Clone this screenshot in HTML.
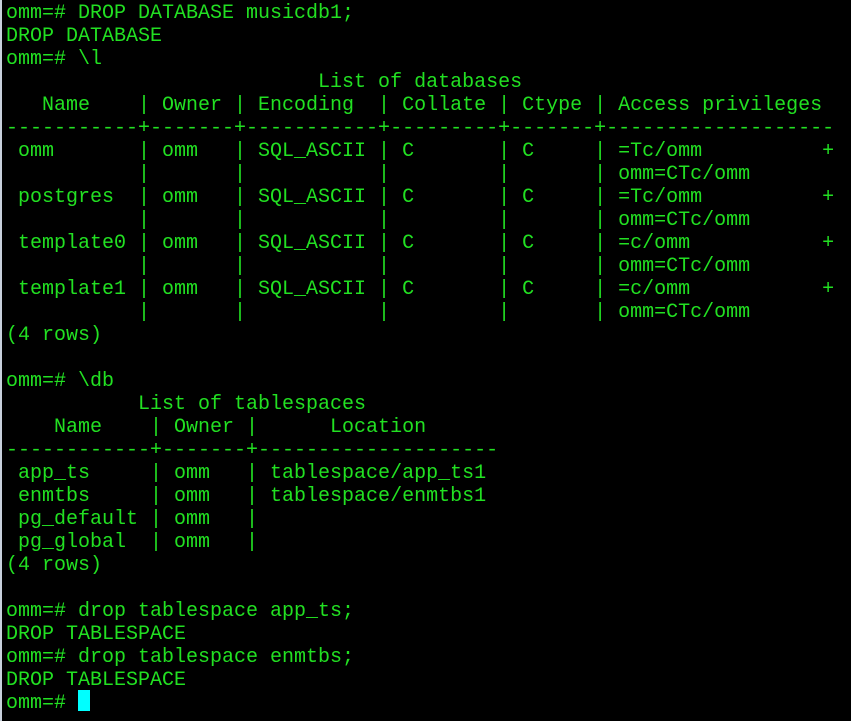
<!DOCTYPE html>
<html><head><meta charset="utf-8"><style>
html,body{margin:0;padding:0;background:#000;width:851px;height:721px;overflow:hidden;}
.strip{position:absolute;left:0;top:0;width:2px;height:721px;background:#c8d0dc;}
pre{position:absolute;left:6px;top:2px;margin:0;font-family:"Liberation Mono",monospace;font-size:20px;line-height:23px;color:#22e022;}
.cur{position:absolute;left:78px;top:690px;width:12px;height:21px;background:#00ffff;}
</style></head><body>
<div class="strip"></div>
<pre>omm=# DROP DATABASE musicdb1;
DROP DATABASE
omm=# \l
                          List of databases
   Name    | Owner | Encoding  | Collate | Ctype | Access privileges
-----------+-------+-----------+---------+-------+-------------------
 omm       | omm   | SQL_ASCII | C       | C     | =Tc/omm          +
           |       |           |         |       | omm=CTc/omm
 postgres  | omm   | SQL_ASCII | C       | C     | =Tc/omm          +
           |       |           |         |       | omm=CTc/omm
 template0 | omm   | SQL_ASCII | C       | C     | =c/omm           +
           |       |           |         |       | omm=CTc/omm
 template1 | omm   | SQL_ASCII | C       | C     | =c/omm           +
           |       |           |         |       | omm=CTc/omm
(4 rows)

omm=# \db
           List of tablespaces
    Name    | Owner |      Location
------------+-------+--------------------
 app_ts     | omm   | tablespace/app_ts1
 enmtbs     | omm   | tablespace/enmtbs1
 pg_default | omm   |
 pg_global  | omm   |
(4 rows)

omm=# drop tablespace app_ts;
DROP TABLESPACE
omm=# drop tablespace enmtbs;
DROP TABLESPACE
omm=# </pre>
<div class="cur"></div>
</body></html>
